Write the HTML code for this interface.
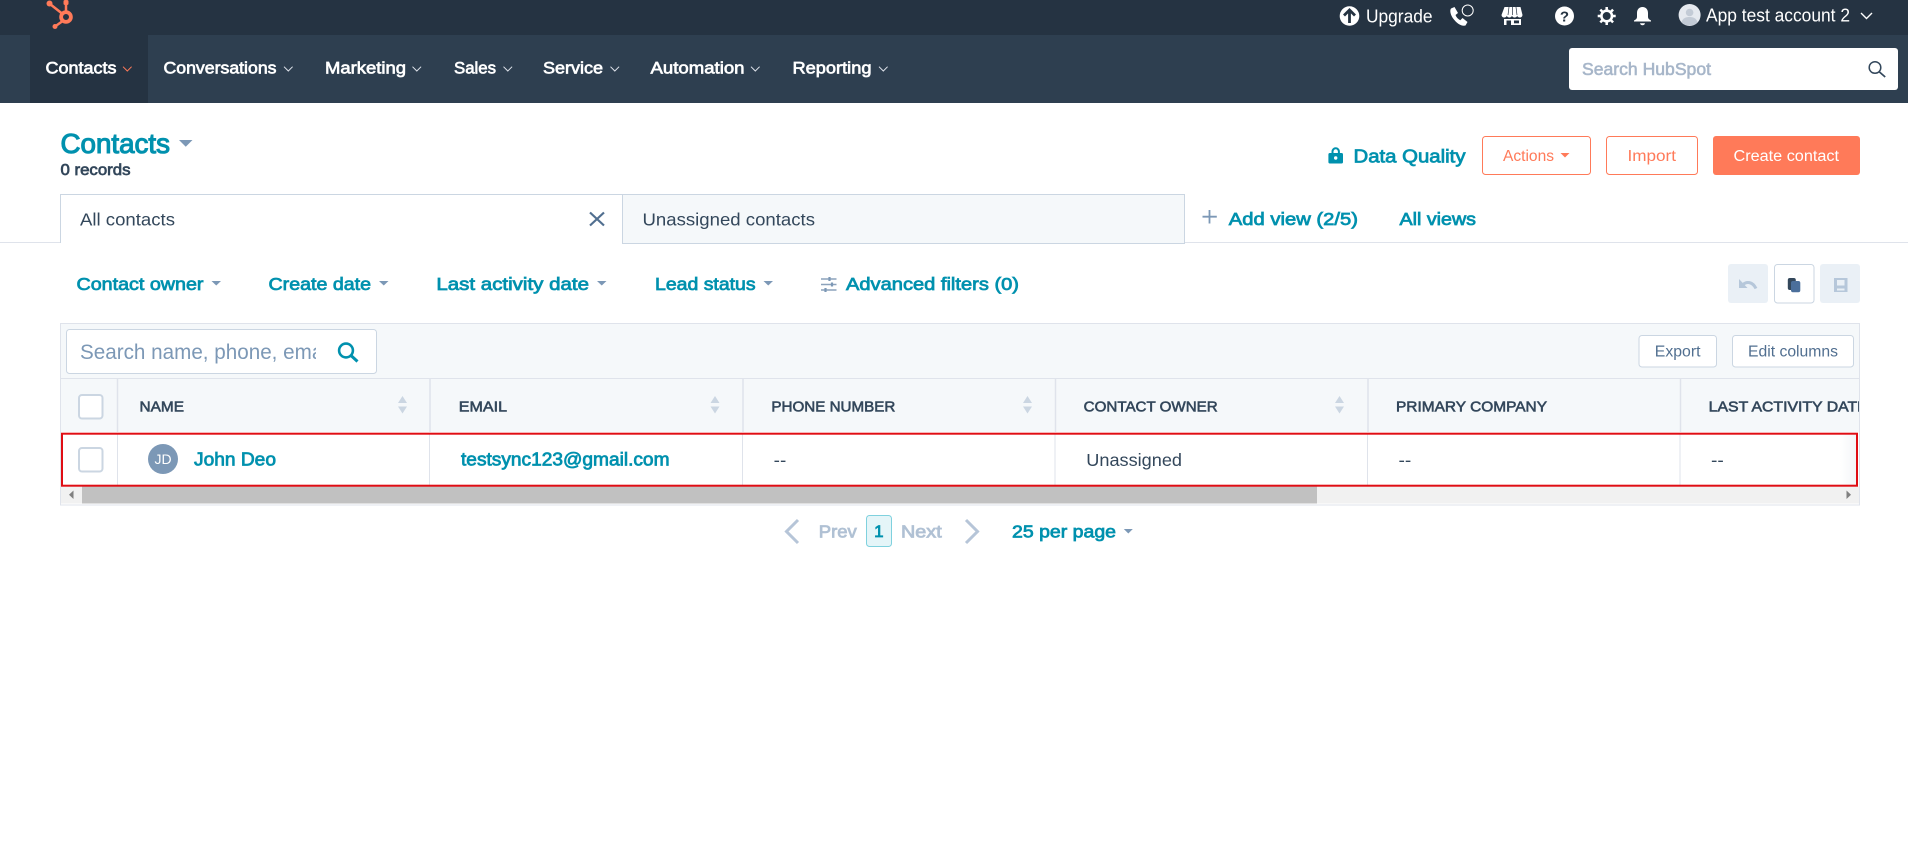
<!DOCTYPE html>
<html lang="en"><head><meta charset="utf-8"><title>Contacts</title>
<style>
html,body{margin:0;padding:0;background:#fff;width:1908px;height:854px;overflow:hidden}
svg{display:block}
text{font-family:"Liberation Sans",sans-serif;white-space:pre}
.t{fill:#0091ae;stroke:#0091ae;stroke-width:.75px}
.big{stroke-width:1.1px}
.n{fill:#fff;stroke:#fff;stroke-width:.65px;font-size:16.5px}
.h{fill:#33475b;stroke:#33475b;stroke-width:.6px;font-size:15px}
.k{fill:#33475b;stroke:#33475b;stroke-width:.7px}
.p{fill:#b0c1d4;stroke:#b0c1d4;stroke-width:.8px}
.g{fill:#a7b6c9;stroke:#a7b6c9;stroke-width:.6px}
</style></head><body>
<svg width="1908" height="854" viewBox="0 0 1908 854" xmlns="http://www.w3.org/2000/svg">
<defs>
<clipPath id="c1"><rect x="78" y="335" width="238" height="34"/></clipPath>
<clipPath id="c2"><rect x="1681" y="380" width="178" height="52"/></clipPath>
<linearGradient id="sh" x1="0" x2="1" y1="0" y2="0"><stop offset="0" stop-color="#dfe3eb" stop-opacity="0"/><stop offset="1" stop-color="#dfe3eb" stop-opacity=".35"/></linearGradient>
</defs>
<rect width="1908" height="854" fill="#fff"/>
<!-- top bars -->
<rect width="1908" height="35" fill="#253342"/>
<rect y="35" width="1908" height="68" fill="#2e3f50"/>
<rect x="30" y="35" width="118" height="68" fill="#253342"/>
<!-- logo -->
<g stroke="#ff7a59" fill="none">
<circle cx="66" cy="17" r="4.9" stroke-width="3.8"/>
<path d="M66 12V3M62 13.500L50 4M62 21.500L55 26.500" stroke-width="2.500"/>
</g>
<g fill="#ff7a59"><rect x="63.500" y="0" width="5" height="5" rx="1.500"/><circle cx="49.500" cy="3.500" r="3"/><circle cx="55" cy="26.500" r="2.500"/></g>
<!-- nav -->
<text class="n" x="45.500" y="73.500" textLength="71" lengthAdjust="spacingAndGlyphs">Contacts</text>
<path d="M123 66.700l4.300 4.300 4.300-4.300" fill="none" stroke="#ff7a59" stroke-width="1"/>
<text class="n" x="163.500" y="73.500" textLength="113" lengthAdjust="spacingAndGlyphs">Conversations</text>
<path d="M284 66.700l4.300 4.300 4.300-4.300" fill="none" stroke="#dfe3eb" stroke-width="1"/>
<text class="n" x="325" y="73.500" textLength="81" lengthAdjust="spacingAndGlyphs">Marketing</text>
<path d="M412.500 66.700l4.300 4.300 4.300-4.300" fill="none" stroke="#dfe3eb" stroke-width="1"/>
<text class="n" x="454" y="73.500" textLength="42" lengthAdjust="spacingAndGlyphs">Sales</text>
<path d="M503.500 66.700l4.300 4.300 4.300-4.300" fill="none" stroke="#dfe3eb" stroke-width="1"/>
<text class="n" x="543" y="73.500" textLength="60" lengthAdjust="spacingAndGlyphs">Service</text>
<path d="M610.500 66.700l4.300 4.300 4.300-4.300" fill="none" stroke="#dfe3eb" stroke-width="1"/>
<text class="n" x="650.500" y="73.500" textLength="94" lengthAdjust="spacingAndGlyphs">Automation</text>
<path d="M751 66.700l4.300 4.300 4.300-4.300" fill="none" stroke="#dfe3eb" stroke-width="1"/>
<text class="n" x="792.500" y="73.500" textLength="79" lengthAdjust="spacingAndGlyphs">Reporting</text>
<path d="M879 66.700l4.300 4.300 4.300-4.300" fill="none" stroke="#dfe3eb" stroke-width="1"/>
<!-- upgrade -->
<circle cx="1349.500" cy="16" r="9.800" fill="#fff"/>
<path d="M1349.500 23V10.500M1344 15.500l5.500-5.500 5.500 5.500" fill="none" stroke="#253342" stroke-width="2.800"/>
<text x="1366" y="22.500" font-size="18" fill="#fff" textLength="66.500" lengthAdjust="spacingAndGlyphs">Upgrade</text>
<!-- phone -->
<path d="M1451 8.500l3.500-1.500 3.500 6-2.500 2c1 2.500 2.500 4 4.800 5.300l2.200-2.300 5 4-2 3.500c-4 1-8.500-2-12-6.500-3-4-4-8.500-2.500-10.500z" fill="#fff"/>
<circle cx="1467.700" cy="10.500" r="5.500" fill="#253342" stroke="#fff" stroke-width="1"/>
<!-- marketplace -->
<path d="M1504.500 7h16l2 8c-.2 1.700-1.200 2.500-2.600 2.500s-2.400-.7-2.700-1.700c-.4 1-1.300 1.700-2.600 1.700s-2.200-.7-2.600-1.700c-.4 1-1.300 1.700-2.600 1.700s-2.200-.7-2.600-1.700c-.3 1-1.300 1.700-2.700 1.700s-2.400-.8-2.600-2.500z" fill="#fff"/>
<path d="M1509 7l-1 8M1516 7l1 8M1512.500 7v8" stroke="#253342" stroke-width=".7"/>
<path d="M1504 19h17v6h-17z" fill="#fff"/>
<rect x="1506.500" y="20.500" width="4.500" height="4.500" fill="#253342"/><rect x="1514" y="20.500" width="5" height="2.800" fill="#253342"/>
<!-- help -->
<circle cx="1564.500" cy="16" r="9.500" fill="#fff"/>
<text x="1564.500" y="21.500" text-anchor="middle" font-weight="700" font-size="15" fill="#253342">?</text>
<!-- gear -->
<circle cx="1606.700" cy="16" r="5.300" fill="none" stroke="#fff" stroke-width="2.600"/>
<path d="M1606.700 7v3.300M1606.700 21.700V25M1597.700 16h3.300M1612.400 16h3.300M1600.300 9.600l2.300 2.300M1610.800 20.100l2.300 2.300M1600.300 22.400l2.300-2.300M1610.800 11.900l2.300-2.300" stroke="#fff" stroke-width="2.500"/>
<!-- bell -->
<path d="M1642.500 7c-3.500 0-5.500 2.500-5.500 6v4c0 1.500-1 2.600-3 3.500v1h17v-1c-2-.9-3-2-3-3.500v-4c0-3.500-2-6-5.500-6z" fill="#fff"/>
<path d="M1640 23.300h5c-.3 1.300-1.200 2-2.500 2s-2.200-.7-2.500-2z" fill="#fff"/>
<!-- avatar -->
<circle cx="1689.600" cy="15" r="11" fill="#e5e9ef"/>
<circle cx="1689.600" cy="12.500" r="3.800" fill="#c3cbd6"/>
<path d="M1681.500 22.500c1-4.500 4.500-5.500 8-5.500s7 1 8 5.500c-4 4-12 4-16 0z" fill="#c3cbd6"/>
<text x="1706" y="21.500" font-size="18" fill="#fff" textLength="144" lengthAdjust="spacingAndGlyphs">App test account 2</text>
<path d="M1861 13l5.500 5.500 5.500-5.500" fill="none" stroke="#fff" stroke-width="1.400"/>
<!-- global search -->
<rect x="1569" y="48" width="329" height="42" rx="3" fill="#fff"/>
<text class="g" x="1582" y="75" font-size="17.500" textLength="129" lengthAdjust="spacingAndGlyphs">Search HubSpot</text>
<circle cx="1875" cy="67.500" r="5.800" fill="none" stroke="#33475b" stroke-width="1.500"/>
<path d="M1879.200 71.700l6 5.300" stroke="#33475b" stroke-width="1.700"/>
<!-- heading -->
<text class="t big" x="60.500" y="153" font-size="27.500" textLength="109.500" lengthAdjust="spacingAndGlyphs">Contacts</text>
<path d="M179 140h13.500l-6.750 6.700z" fill="#7c98b6"/>
<text class="k" x="60.500" y="175" font-size="15.500" textLength="70" lengthAdjust="spacingAndGlyphs">0 records</text>
<!-- right actions -->
<path d="M1331.500 153v-1.500a4.200 4.200 0 0 1 8.400 0v1.500h1.600a1.500 1.500 0 0 1 1.500 1.500v7.500a1.500 1.500 0 0 1-1.500 1.500h-11.600a1.500 1.500 0 0 1-1.500-1.500v-7.500a1.500 1.500 0 0 1 1.500-1.500zm2 0h4.400v-1.500a2.200 2.200 0 0 0-4.400 0z" fill="#0091ae" fill-rule="evenodd"/>
<circle cx="1335.700" cy="158" r="1.700" fill="#fff"/>
<text class="t" x="1353.500" y="162.500" font-size="18.500" textLength="112" lengthAdjust="spacingAndGlyphs">Data Quality</text>
<rect x="1482.500" y="136.500" width="108" height="38" rx="3" fill="#fff" stroke="#ff7a59"/>
<text x="1503" y="161" font-size="15.500" fill="#ff7a59" textLength="51" lengthAdjust="spacingAndGlyphs">Actions</text>
<path d="M1560.500 153h9l-4.500 4.500z" fill="#ff7a59"/>
<rect x="1606.500" y="136.500" width="91" height="38" rx="3" fill="#fff" stroke="#ff7a59"/>
<text x="1627.500" y="161" font-size="15.500" fill="#ff7a59" textLength="48.500" lengthAdjust="spacingAndGlyphs">Import</text>
<rect x="1713" y="136" width="147" height="39" rx="3" fill="#ff7a59"/>
<text x="1733.500" y="161" font-size="15.500" fill="#fff" textLength="105.500" lengthAdjust="spacingAndGlyphs">Create contact</text>
<!-- tabs -->
<path d="M0 242.500H61M1185 242.500H1908" stroke="#dfe3eb"/>
<path d="M60.500 243V194.500H622.500V243.500" fill="#fff" stroke="#cbd6e2"/>
<rect x="622.500" y="194.500" width="562" height="49" fill="#f5f8fa" stroke="#cbd6e2"/>
<text x="80" y="225.500" font-size="17.500" fill="#33475b" textLength="95" lengthAdjust="spacingAndGlyphs">All contacts</text>
<path d="M590 212.500l14 13M604 212.500l-14 13" stroke="#516f90" stroke-width="2.200"/>
<text x="642.500" y="225.500" font-size="17.500" fill="#33475b" textLength="172.500" lengthAdjust="spacingAndGlyphs">Unassigned contacts</text>
<path d="M1209.500 210v13.500M1202.500 216.700h14.300" stroke="#7c98b6" stroke-width="1.800"/>
<text class="t" x="1228.800" y="224.800" font-size="17.500" textLength="129.200" lengthAdjust="spacingAndGlyphs">Add view (2/5)</text>
<text class="t" x="1399.500" y="224.800" font-size="17.500" textLength="76.500" lengthAdjust="spacingAndGlyphs">All views</text>
<!-- filters -->
<text class="t" x="76.500" y="289.800" font-size="17.500" textLength="127" lengthAdjust="spacingAndGlyphs">Contact owner</text>
<path d="M211.500 281h9.500l-4.750 4.500z" fill="#7c98b6"/>
<text class="t" x="268.500" y="289.800" font-size="17.500" textLength="102.500" lengthAdjust="spacingAndGlyphs">Create date</text>
<path d="M379 281h9.500l-4.750 4.500z" fill="#7c98b6"/>
<text class="t" x="436.400" y="289.800" font-size="17.500" textLength="152.600" lengthAdjust="spacingAndGlyphs">Last activity date</text>
<path d="M597 281h9.500l-4.750 4.500z" fill="#7c98b6"/>
<text class="t" x="655" y="289.800" font-size="17.500" textLength="100.600" lengthAdjust="spacingAndGlyphs">Lead status</text>
<path d="M763.500 281h9.500l-4.750 4.500z" fill="#7c98b6"/>
<path d="M821 279h15.500M821 284.500h15.500M821 290h15.500" stroke="#8ca2bb" stroke-width="1.500"/>
<path d="M829.500 277v4M832 282.500v4M825.500 288v4" stroke="#7c98b6" stroke-width="2.200"/>
<text class="t" x="846" y="289.800" font-size="17.500" textLength="173" lengthAdjust="spacingAndGlyphs">Advanced filters (0)</text>
<!-- view buttons -->
<rect x="1728" y="264" width="40" height="39" rx="3" fill="#eaf0f6"/>
<path d="M1739 279v9h8.500z" fill="#b6c7da"/>
<path d="M1742.500 285c4-4 10-3.500 13.500 3.500" fill="none" stroke="#b6c7da" stroke-width="3"/>
<rect x="1774.500" y="264.500" width="39.500" height="38.500" rx="3" fill="#fff" stroke="#cbd6e2"/>
<rect x="1787.800" y="278" width="8" height="12" rx="2" fill="#33475b"/>
<rect x="1791" y="281" width="9.300" height="11.300" rx="2" fill="#4b6f9b"/>
<rect x="1820" y="264" width="40" height="39" rx="3" fill="#eaf0f6"/>
<path d="M1834 278h13.500v14h-13.500zM1837 280v5.500h7.500V280zM1837 288.500v2h7.500v-2z" fill="#b6c7da" fill-rule="evenodd"/>
<!-- table -->
<rect x="60.500" y="323.500" width="1799" height="181.500" fill="#fff" stroke="#dfe3eb"/>
<rect x="61" y="324" width="1798" height="108" fill="#f5f8fa"/>
<path d="M61 378.500H1859" stroke="#dfe3eb"/>
<rect x="66.500" y="329.500" width="310" height="44" rx="3" fill="#fff" stroke="#cbd6e2"/>
<g clip-path="url(#c1)"><text x="80" y="359" font-size="21" fill="#7c98b6" textLength="252.500" lengthAdjust="spacingAndGlyphs">Search name, phone, email</text></g>
<circle cx="346" cy="350.500" r="6.900" fill="none" stroke="#0091ae" stroke-width="2.600"/>
<path d="M351 355.500l6.500 6" stroke="#0091ae" stroke-width="3"/>
<rect x="1639" y="335.500" width="77.500" height="31.500" rx="3" fill="#fff" stroke="#cbd6e2"/>
<text x="1654.800" y="356.500" font-size="15.500" fill="#516f90" textLength="45.700" lengthAdjust="spacingAndGlyphs">Export</text>
<rect x="1732.500" y="335.500" width="121" height="31.500" rx="3" fill="#fff" stroke="#cbd6e2"/>
<text x="1748" y="356.500" font-size="15.500" fill="#516f90" textLength="90" lengthAdjust="spacingAndGlyphs">Edit columns</text>
<!-- column separators -->
<path d="M117.500 379V432M430 379V432M743 379V432M1055.500 379V432M1368 379V432M1680.500 379V432" stroke="#dfe3eb" stroke-width="1.500"/>
<path d="M117.500 434V485M429.500 434V485M742.500 434V485M1055 434V485M1367.500 434V485M1680 434V485" stroke="#dfe3eb"/>
<!-- header -->
<rect x="79" y="395" width="23.500" height="23.500" rx="3" fill="#fff" stroke="#cbd6e2" stroke-width="2"/>
<text class="h" x="139.500" y="411.700" textLength="44.500" lengthAdjust="spacingAndGlyphs">NAME</text>
<text class="h" x="458.800" y="411.700" textLength="48.200" lengthAdjust="spacingAndGlyphs">EMAIL</text>
<text class="h" x="771.400" y="411.700" textLength="124" lengthAdjust="spacingAndGlyphs">PHONE NUMBER</text>
<text class="h" x="1083.700" y="411.700" textLength="134" lengthAdjust="spacingAndGlyphs">CONTACT OWNER</text>
<text class="h" x="1396" y="411.700" textLength="151" lengthAdjust="spacingAndGlyphs">PRIMARY COMPANY</text>
<g clip-path="url(#c2)"><text class="h" x="1708.700" y="411.700" textLength="159" lengthAdjust="spacingAndGlyphs">LAST ACTIVITY DATE</text></g>
<g fill="#cbd6e2">
<path d="M398 403l4.500-7 4.500 7zM398 406.500l4.500 7 4.500-7z"/>
<path d="M710.500 403l4.500-7 4.500 7zM710.500 406.500l4.500 7 4.500-7z"/>
<path d="M1023 403l4.500-7 4.500 7zM1023 406.500l4.500 7 4.500-7z"/>
<path d="M1335 403l4.500-7 4.500 7zM1335 406.500l4.500 7 4.500-7z"/>
</g>
<!-- row -->
<rect x="1840" y="434" width="16" height="51" fill="url(#sh)"/>
<rect x="79" y="448" width="23.500" height="23.500" rx="3" fill="#fff" stroke="#cbd6e2" stroke-width="2"/>
<circle cx="163" cy="459" r="15" fill="#7c98b6"/>
<text x="163" y="464" text-anchor="middle" font-size="14" fill="#fff">JD</text>
<text class="t" x="194" y="465.700" font-size="18" textLength="82" lengthAdjust="spacingAndGlyphs">John Deo</text>
<text class="t" x="461" y="465.700" font-size="18" textLength="208.500" lengthAdjust="spacingAndGlyphs">testsync123@gmail.com</text>
<text x="773.700" y="466" font-size="17.500" fill="#33475b" textLength="12.600" lengthAdjust="spacingAndGlyphs">--</text>
<text x="1086.300" y="466" font-size="17.500" fill="#33475b" textLength="95.700" lengthAdjust="spacingAndGlyphs">Unassigned</text>
<text x="1398.500" y="466" font-size="17.500" fill="#33475b" textLength="12.800" lengthAdjust="spacingAndGlyphs">--</text>
<text x="1711" y="466" font-size="17.500" fill="#33475b" textLength="12.800" lengthAdjust="spacingAndGlyphs">--</text>
<!-- scrollbar -->
<rect x="61" y="486.500" width="1798" height="17" fill="#f1f1f1"/>
<rect x="82" y="486.500" width="1235" height="17" fill="#c1c1c1"/>
<path d="M73.500 490.500v8.500l-4.500-4.250z" fill="#808080"/>
<path d="M1846.500 490.500v8.500l4.500-4.250z" fill="#808080"/>
<!-- red highlight -->
<rect x="62" y="433.700" width="1795" height="52" fill="none" stroke="#e00d14" stroke-width="2"/>
<!-- pagination -->
<path d="M798 520l-11.500 11.500 11.500 11.500" fill="none" stroke="#b6c5d8" stroke-width="3"/>
<text class="p" x="818.800" y="537.700" font-size="17.500" textLength="38" lengthAdjust="spacingAndGlyphs">Prev</text>
<rect x="866.500" y="515.500" width="25" height="31" rx="3" fill="#e5f5f8" stroke="#7fd1de"/>
<text x="878.800" y="537" font-size="17" text-anchor="middle" class="t">1</text>
<text class="p" x="901" y="537.700" font-size="17.500" textLength="40.700" lengthAdjust="spacingAndGlyphs">Next</text>
<path d="M966 520l11.500 11.500-11.500 11.500" fill="none" stroke="#b6c5d8" stroke-width="3"/>
<text class="t" x="1012" y="537.700" font-size="17.500" textLength="104" lengthAdjust="spacingAndGlyphs">25 per page</text>
<path d="M1123.800 529h9l-4.500 4.500z" fill="#7c98b6"/>
</svg>
</body></html>
